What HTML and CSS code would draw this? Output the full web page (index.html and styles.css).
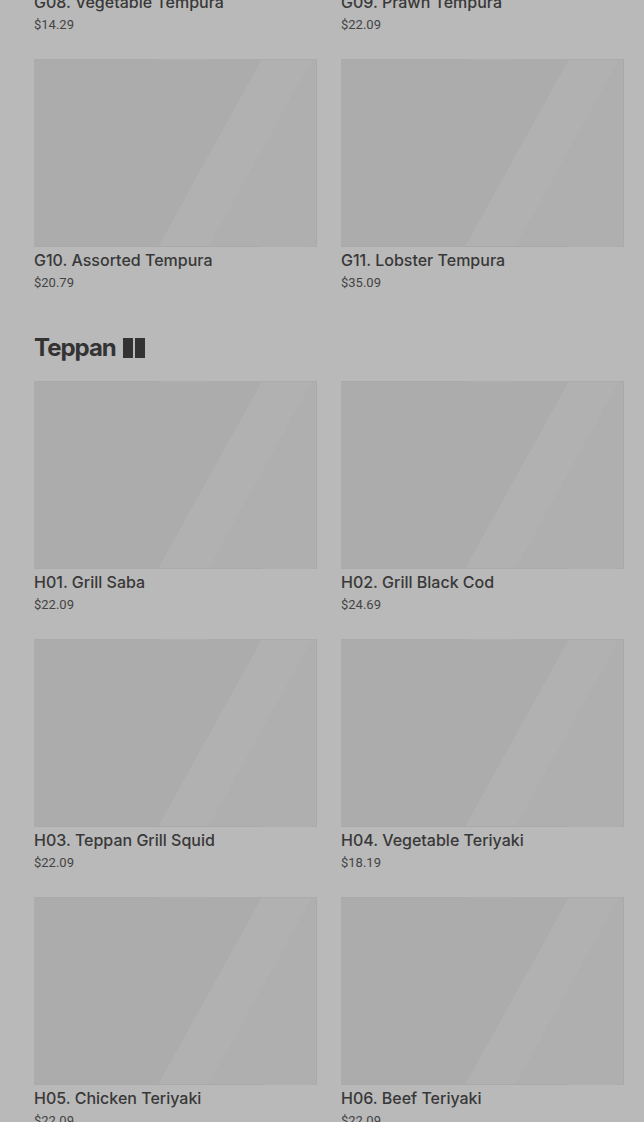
FILE: index.html
```html
<!DOCTYPE html>
<html lang="en">
<head>
    <meta charset="UTF-8">
    <meta name="viewport" content="width=device-width, initial-scale=1.0">
    <title>Menu</title>
    <link rel="stylesheet" href="styles.css">
</head>
<body>
    <main class="menu">
        <section class="menu-section">
            <div class="dish-grid">
                <div class="dish">
                    <div class="dish-img"></div>
                    <div class="dish-name">G08. Vegetable Tempura</div>
                    <div class="dish-price">$14.29</div>
                </div>
                <div class="dish">
                    <div class="dish-img"></div>
                    <div class="dish-name">G09. Prawn Tempura</div>
                    <div class="dish-price">$22.09</div>
                </div>
                <div class="dish">
                    <div class="dish-img"></div>
                    <div class="dish-name">G10. Assorted Tempura</div>
                    <div class="dish-price">$20.79</div>
                </div>
                <div class="dish">
                    <div class="dish-img"></div>
                    <div class="dish-name">G11. Lobster Tempura</div>
                    <div class="dish-price">$35.09</div>
                </div>
            </div>
        </section>

        <section class="menu-section">
            <h2 class="section-title">Teppan <span class="tofu"></span><span class="tofu"></span></h2>
            <div class="dish-grid">
                <div class="dish">
                    <div class="dish-img"></div>
                    <div class="dish-name">H01. Grill Saba</div>
                    <div class="dish-price">$22.09</div>
                </div>
                <div class="dish">
                    <div class="dish-img"></div>
                    <div class="dish-name">H02. Grill Black Cod</div>
                    <div class="dish-price">$24.69</div>
                </div>
                <div class="dish">
                    <div class="dish-img"></div>
                    <div class="dish-name">H03. Teppan Grill Squid</div>
                    <div class="dish-price">$22.09</div>
                </div>
                <div class="dish">
                    <div class="dish-img"></div>
                    <div class="dish-name">H04. Vegetable Teriyaki</div>
                    <div class="dish-price">$18.19</div>
                </div>
                <div class="dish">
                    <div class="dish-img"></div>
                    <div class="dish-name">H05. Chicken Teriyaki</div>
                    <div class="dish-price">$22.09</div>
                </div>
                <div class="dish">
                    <div class="dish-img"></div>
                    <div class="dish-name">H06. Beef Teriyaki</div>
                    <div class="dish-price">$22.09</div>
                </div>
            </div>
        </section>
    </main>
</body>
</html>
```

FILE: styles.css
```css
body {
    font-family: 'Roboto', 'Liberation Sans', sans-serif;
    margin: 0;
    padding: 0;
    background: #b9b9b9;
    color: #363636;
    overflow: hidden;
}

.menu {
    margin-top: -199px;
    padding: 0 20px 0 34px;
}

.menu-section + .menu-section {
    margin-top: 41px;
}

.section-title {
    margin: 0 0 18px;
    font-family: 'Inter', 'Roboto', sans-serif;
    font-size: 24px;
    line-height: 30px;
    font-weight: 700;
    letter-spacing: -1px;
    color: #333;
    display: flex;
    align-items: center;
}

.tofu {
    display: inline-block;
    width: 10px;
    height: 20px;
    background: #333;
    margin-left: 2px;
}

.tofu:first-child {
    margin-left: 7px;
}

.dish-grid {
    display: grid;
    grid-template-columns: 1fr 1fr;
    column-gap: 24px;
    row-gap: 25px;
}

.dish-img {
    height: 188px;
    box-sizing: border-box;
    border: 1px solid rgba(0, 0, 0, 0.012);
    background: linear-gradient(119deg, #acacac 59%, #b1b1b1 59%, #b1b1b1 72%, #afafaf 72%);
}

.dish-name {
    margin-top: 3px;
    font-family: 'Inter', 'Roboto', sans-serif;
    font-size: 16px;
    line-height: 20px;
    font-weight: 500;
    color: #383838;
}

.dish-price {
    margin-top: 4px;
    font-size: 13px;
    line-height: 18px;
    color: #444;
}
```
